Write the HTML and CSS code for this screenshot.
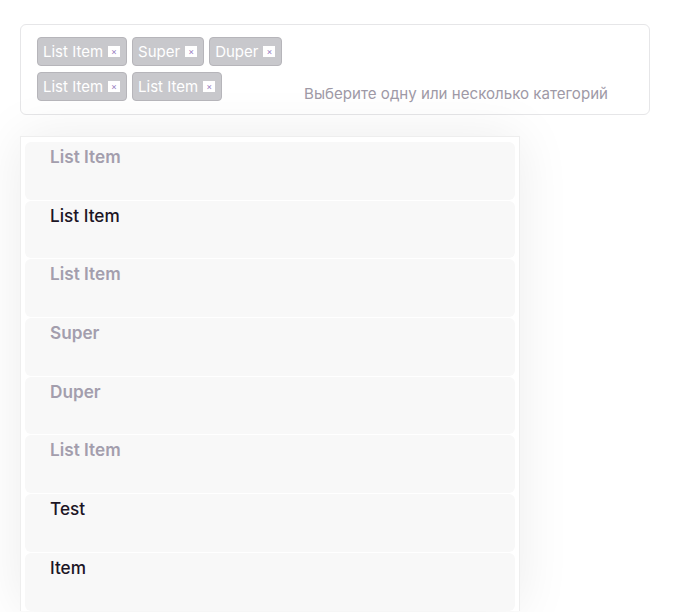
FILE: index.html
```html
<!DOCTYPE html>
<html lang="ru">
<head>
<meta charset="utf-8">
<link rel="stylesheet" href="styles.css">
</head>
<body>
<div class="page">
  <div class="select">
    <div class="chips">
      <span class="chip">List Item<span class="chip-x">×</span></span>
      <span class="chip">Super<span class="chip-x">×</span></span>
      <span class="chip">Duper<span class="chip-x">×</span></span>
      <span class="chip">List Item<span class="chip-x">×</span></span>
      <span class="chip">List Item<span class="chip-x">×</span></span>
    </div>
    <span class="placeholder">Выберите одну или несколько категорий</span>
  </div>
  <div class="dropdown">
    <div class="option selected">List Item</div>
    <div class="option">List Item</div>
    <div class="option selected">List Item</div>
    <div class="option selected">Super</div>
    <div class="option selected">Duper</div>
    <div class="option selected">List Item</div>
    <div class="option">Test</div>
    <div class="option">Item</div>
  </div>
</div>
</body>
</html>
```
FILE: styles.css
```css
html, body {
  margin: 0;
  padding: 0;
  background: #ffffff;
  overflow: hidden;
  height: 612px;
}
body {
  font-family: Inter, "Noto Sans", sans-serif;
}
.page {
  padding: 24px 28px 0 20px;
}
.select {
  width: 630px;
  height: 91px;
  box-sizing: border-box;
  border: 1px solid #e6e6e8;
  border-radius: 6px;
  display: flex;
  justify-content: space-between;
  padding: 12px 41px 11px 16px;
}
.chips {
  width: 262px;
  flex-shrink: 0;
  display: flex;
  flex-wrap: wrap;
  align-content: flex-start;
  gap: 6px 5px;
}
.chip {
  display: inline-flex;
  align-items: center;
  height: 29px;
  box-sizing: border-box;
  padding: 0 6px 0 5px;
  background: #c8c8cc;
  border: 1px solid #b6b5ba;
  border-radius: 4px;
  color: #ffffff;
  font-size: 15px;
}
.chip-x {
  display: inline-flex;
  align-items: center;
  justify-content: center;
  width: 12px;
  height: 11px;
  margin-left: 5px;
  background: #ffffff;
  color: #9a7fc2;
  font-size: 9px;
  line-height: 1;
}
.placeholder {
  align-self: flex-end;
  flex-shrink: 0;
  white-space: nowrap;
  color: #9e99a6;
  font-size: 15.1px;
  line-height: 18px;
}
.dropdown {
  margin-top: 21px;
  width: 500px;
  box-sizing: border-box;
  border: 1px solid #eeeeee;
  border-bottom: none;
  padding: 5px 4px 0 4px;
  display: flex;
  flex-direction: column;
  gap: 1px;
  box-shadow: 0 0 50px rgba(0, 0, 0, 0.08);
  background: #ffffff;
}
.option {
  height: 57.7px;
  box-sizing: border-box;
  padding: 4px 25px 0;
  background: #f8f8f8;
  border-radius: 6px;
  font-size: 17.2px;
  line-height: 21px;
  font-weight: 500;
  color: #1c1525;
  flex-shrink: 0;
}
.option.selected {
  font-weight: 600;
  color: #a39ead;
}
```
